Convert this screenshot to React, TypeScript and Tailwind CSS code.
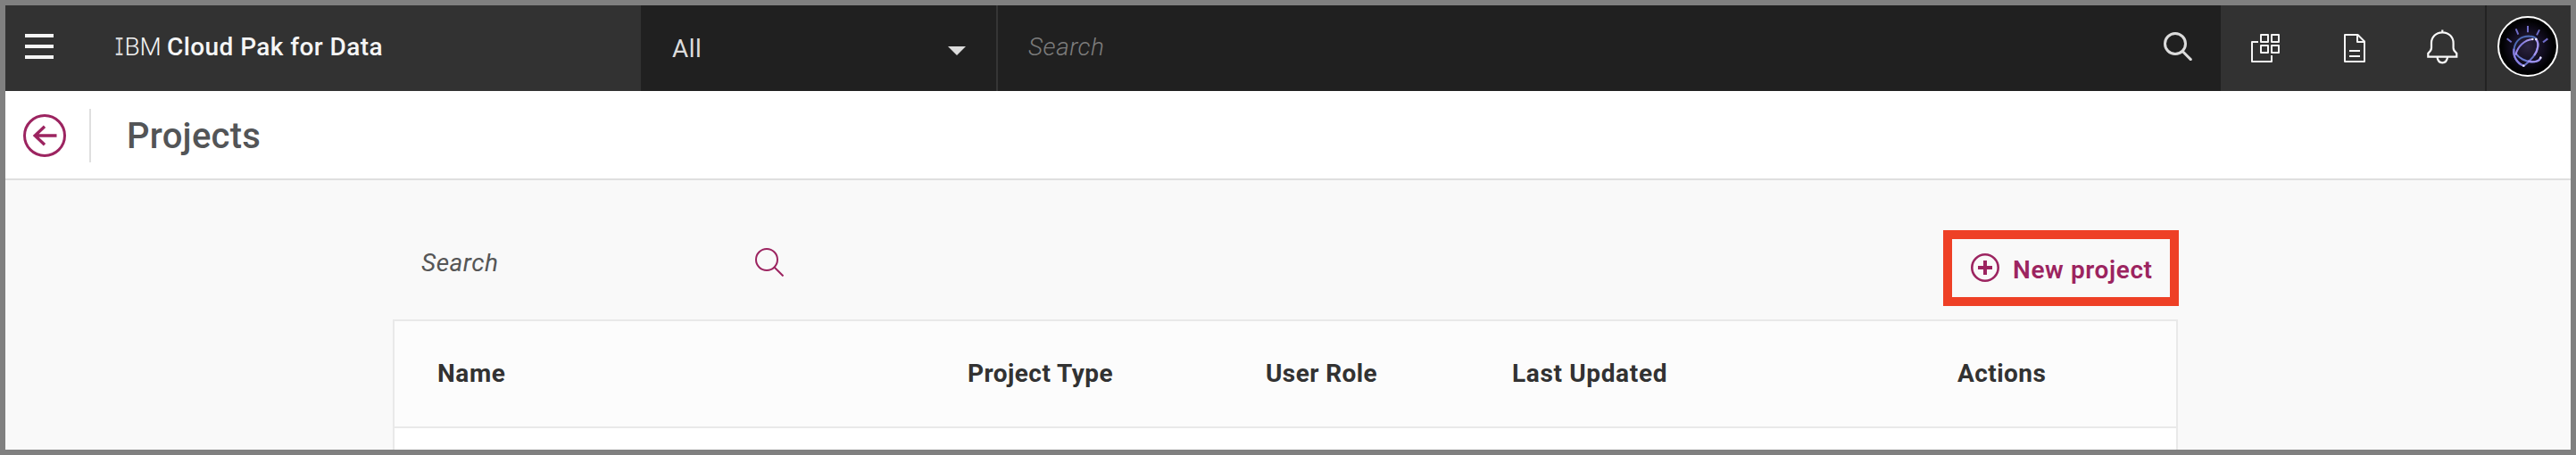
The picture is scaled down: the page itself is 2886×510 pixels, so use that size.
const columns = [
  { label: "Name", tracking: "tracking-[0.6px]" },
  { label: "Project Type", tracking: "tracking-[0.45px]" },
  { label: "User Role", tracking: "tracking-[0.4px]" },
  { label: "Last Updated", tracking: "tracking-[0.65px]" },
  { label: "Actions", tracking: "tracking-[0.45px]" },
];

function MenuIcon() {
  return (
    <svg width="32" height="28" viewBox="0 0 32 28" fill="#f5f5f5" shapeRendering="crispEdges">
      <rect width="32" height="4" />
      <rect y="12" width="32" height="4" />
      <rect y="24" width="32" height="4" />
    </svg>
  );
}

function AppsIcon() {
  return (
    <svg width="32" height="32" viewBox="0 0 32 32" fill="none" stroke="#f5f5f5" strokeWidth="2" strokeLinejoin="round">
      <rect x="11" y="1" width="8" height="8" />
      <rect x="23" y="1" width="8" height="8" />
      <rect x="11" y="13" width="8" height="8" />
      <rect x="23" y="13" width="8" height="8" />
      <path d="M8 9H1v22h22v-7" />
    </svg>
  );
}

function DocumentIcon() {
  return (
    <svg width="24" height="32" viewBox="0 0 24 32" fill="none" stroke="#f5f5f5" strokeWidth="2" strokeLinejoin="round">
      <path d="M1 1h14.500L23 8.500V31H1z" />
      <path d="M15 1v8h8M6 19h12M6 25h12" />
    </svg>
  );
}

function BellIcon() {
  return (
    <svg width="35" height="39" viewBox="0 0 35 39" fill="none" stroke="#f8f8f8" strokeWidth="2.200">
      <path d="M17.300 0.500v3M17.300 3.300C10 3.300 5 8.600 5 15.200v5.600C5 23.300 4 24.500 1.300 26.800v3.900h32v-3.900c-2.700-2.300-3.700-3.500-3.700-6v-5.600C29.600 8.600 24.600 3.300 17.300 3.300z" />
      <path d="M11.500 31c.6 4.100 2.800 6.300 5.800 6.300s5.200-2.200 5.800-6.300" />
    </svg>
  );
}

function Avatar() {
  return (
    <svg width="68" height="68" viewBox="24 24 204 204" fill="none" strokeLinecap="round">
      <defs>
        <radialGradient id="glow">
          <stop offset="0" stopColor="#2c2440" />
          <stop offset="0.55" stopColor="#120d20" />
          <stop offset="0.85" stopColor="#020204" />
          <stop offset="1" stopColor="#000" />
        </radialGradient>
        <linearGradient id="violet" x1="0" y1="1" x2="1" y2="0">
          <stop offset="0" stopColor="#a48cf0" />
          <stop offset="0.5" stopColor="#7f78dc" />
          <stop offset="1" stopColor="#b9a4f4" />
        </linearGradient>
      </defs>
      <circle cx="126" cy="126" r="99" fill="url(#glow)" stroke="#fff" strokeWidth="6" />
      <g stroke="#6f6cc8" strokeWidth="6" strokeLinecap="butt">
        <path d="M126 57v22" />
        <path d="M86 67l8 19" />
        <path d="M165 70l-9 18" />
        <path d="M56 100l15 12" />
        <path d="M193 100l-16 12" />
      </g>
      <g strokeWidth="6.500">
        <path d="M112 191C88 183 76 158 80 133C85 106 104 91 132 92C143 92 149 95 154 100" stroke="#4d69b4" />
        <path d="M86 150C96 165 118 178 140 178C155 178 166 174 169 164" stroke="#6878cf" />
        <path d="M153 102C167 115 159 142 144 161C136 171 126 182 114 190" stroke="#6a72c8" />
        <path d="M112 191C89 182 77 161 79 137" stroke="url(#violet)" />
        <path d="M86 152C91 129 115 103 142 102" stroke="url(#violet)" />
        <path d="M153 102C166 115 159 140 149 154" stroke="#a594ee" />
        <path d="M128 176C148 181 166 175 169 164" stroke="#9f92ee" />
      </g>
      <g fill="#f0ecff">
        <circle cx="142" cy="102" r="3.500" />
        <circle cx="154" cy="102" r="4" />
        <circle cx="169" cy="164" r="3.500" />
        <circle cx="112" cy="191" r="3.500" />
      </g>
    </svg>
  );
}

function HeaderActions() {
  return (
    <div className="flex w-[296px] shrink-0 items-start pl-[34px]">
      <div className="mt-8 w-[104px]">
        <AppsIcon />
      </div>
      <div className="mt-8 w-[93px]">
        <DocumentIcon />
      </div>
      <div className="mt-[27px]">
        <BellIcon />
      </div>
    </div>
  );
}

function HeaderBar() {
  return (
    <header className="flex h-24 shrink-0 bg-[#323232]">
      <div className="flex w-[712px] shrink-0 items-start">
        <button className="ml-[22px] mt-8 shrink-0" aria-label="Menu">
          <MenuIcon />
        </button>
        <div className="ml-[68px] mt-[27px] flex whitespace-nowrap text-[28px] leading-10 text-[#f5f5f5]">
          <span className="inline-block w-[11.5px]">
            <span className="inline-block origin-left scale-x-[0.62] font-['Liberation_Mono',monospace] text-[30px] leading-10 text-[#d6d6d6]">I</span>
          </span>
          <span className="font-light tracking-[-0.2px]">BM</span>
          <span className="ml-[6.5px] font-medium tracking-[0.42px]">Cloud Pak for Data</span>
        </div>
      </div>

      <div className="flex w-[400px] shrink-0 items-start justify-between border-r-2 border-[#353535] bg-[#202020] pl-[35px] pr-[34px]">
        <span className="mt-[29px] text-[28px] leading-10 tracking-[0.5px] text-[#dcdcdc]">All</span>
        <svg className="mt-[46px]" width="20" height="10" viewBox="0 0 20 10" fill="#dcdcdc">
          <path d="M0 0h20L10 10z" />
        </svg>
      </div>

      <div className="flex flex-1 items-start justify-between bg-[#202020] pl-[34px] pr-8">
        <span className="mt-[27px] text-[28px] font-light italic leading-10 tracking-[0.5px] text-[#7c7c7c]">Search</span>
        <svg className="mt-[30px]" width="32" height="32" viewBox="0 0 32 32" fill="none" stroke="#dcdcdc" strokeWidth="3">
          <circle cx="13" cy="13" r="11.500" />
          <path d="M22 22.300l8.300 8.300" strokeLinecap="round" />
        </svg>
      </div>

      <HeaderActions />

      <div className="flex w-24 shrink-0 items-start border-l-2 border-[#222222] pl-3 pt-3">
        <Avatar />
      </div>
    </header>
  );
}

function TitleBar() {
  return (
    <div className="flex h-[100px] shrink-0 items-start border-b-2 border-[#dfdfdf] bg-white">
      <svg className="ml-5 mt-[26px]" width="48" height="48" viewBox="0 0 48 48" fill="none" stroke="#9c2460" strokeWidth="3">
        <circle cx="24" cy="24" r="22.500" />
        <path d="M37.500 24H13M24 13.800L13.200 24L24 34.200" strokeWidth="3.400" />
      </svg>
      <div className="ml-[26px] mt-5 h-[60px] w-0.5 bg-[#dfdfdf]" />
      <h1 className="ml-10 mt-[27px] text-[40px] font-medium leading-[48px] tracking-[0.25px] text-[#535557]">Projects</h1>
    </div>
  );
}

export default function App() {
  return (
    <div className="flex h-[510px] w-[2886px] flex-col overflow-hidden border-[6px] border-[#808080] bg-[#f9f9f9] font-[Roboto,sans-serif]">
      <HeaderBar />
      <TitleBar />
      <main className="ml-[434px] w-[2001px]">
        <div className="flex h-[156px] items-start">
          <div className="flex w-[438px] items-start justify-between pl-8">
            <span className="mt-[73px] text-[28px] italic leading-10 tracking-[0.5px] text-[#565656]">Search</span>
            <svg className="mt-[76px]" width="32" height="32" viewBox="0 0 32 32" fill="none" stroke="#9c2460" strokeWidth="2">
              <circle cx="13" cy="13" r="12" />
              <path d="M21.500 21.500l10 10" />
            </svg>
          </div>
          <button className="ml-auto mt-14 flex h-[85px] w-[264px] items-start border-[10px] border-[#ee4026] pl-[21px]">
            <svg className="mt-4" width="32" height="32" viewBox="0 0 32 32" fill="none" stroke="#9c2460">
              <circle cx="16" cy="16" r="14.700" strokeWidth="2.600" />
              <path d="M16 8v16M8 16h16" strokeWidth="4" />
            </svg>
            <span className="ml-[15px] mt-[15px] whitespace-nowrap text-[28px] font-semibold leading-10 tracking-[0.6px] text-[#9c2460]">New project</span>
          </button>
        </div>
        <div className="h-[160px] w-[2000px] border-2 border-[#e9e9e9] bg-white">
          <div className="grid h-[120px] grid-cols-[594px_334px_276px_499px_1fr] border-b-2 border-[#e9e9e9] bg-[#fcfcfc] pl-12 pt-[39px] text-[28px] font-bold leading-10 text-[#323232]">
            {columns.map((column) => (
              <span key={column.label} className={column.tracking}>
                {column.label}
              </span>
            ))}
          </div>
        </div>
      </main>
    </div>
  );
}
